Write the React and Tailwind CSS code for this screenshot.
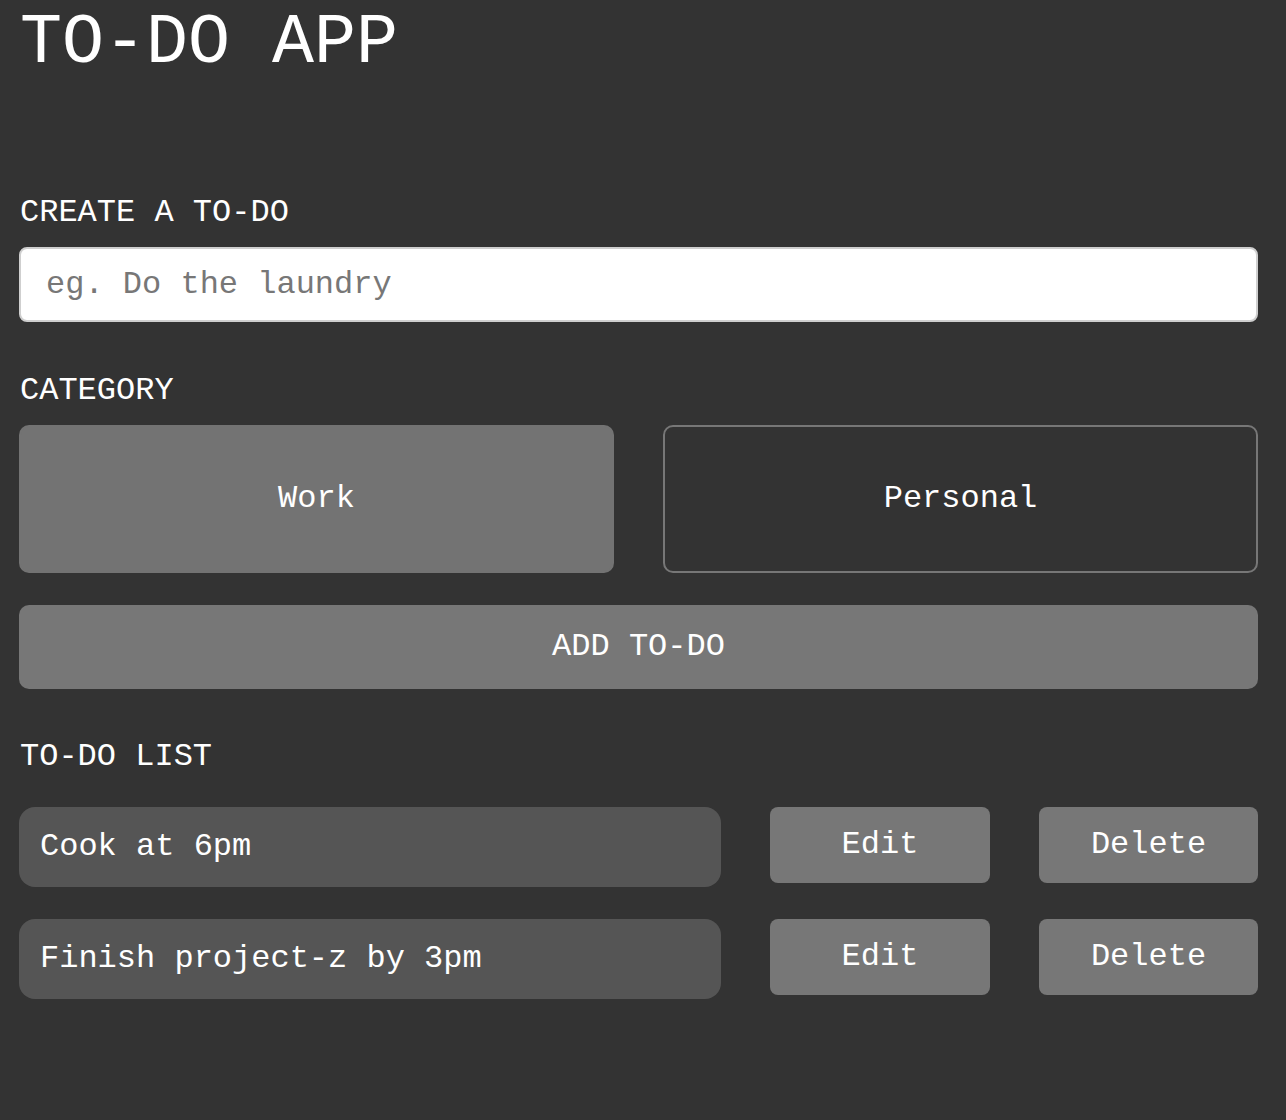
import React, { useState } from "react";

const todos = [
  { id: 1, text: "Cook at 6pm" },
  { id: 2, text: "Finish project-z by 3pm" },
];

export default function App() {
  const [category, setCategory] = useState("work");
  const [value, setValue] = useState("");

  return (
    <div className="min-h-screen bg-[#333333] text-white font-['Liberation_Mono','Courier_New',monospace]">
      <div className="w-[1239px] ml-[19px] pt-[9px] pb-[120px]">
        <h1 className="text-[70px] leading-none font-normal pl-px">TO-DO APP</h1>

        {/* create */}
        <h2 className="mt-[118px] text-[32px] leading-none pl-px">CREATE A TO-DO</h2>
        <input
          type="text"
          value={value}
          onChange={(e) => setValue(e.target.value)}
          placeholder="eg. Do the laundry"
          className="mt-[18px] block w-full h-[75px] px-[25px] bg-white text-black text-[32px] border-2 border-[#cfcfcf] rounded-[8px] outline-none placeholder:text-[#777777]"
        />

        <h2 className="mt-[53px] text-[32px] leading-none pl-px">CATEGORY</h2>
        <div className="mt-[18px] grid grid-cols-2 gap-[49px]">
          <button
            onClick={() => setCategory("work")}
            className={
              category === "work"
                ? "h-[148px] rounded-[10px] bg-[#737373] text-[32px] text-white border-2 border-[#737373]"
                : "h-[148px] rounded-[10px] bg-transparent text-[32px] text-white border-2 border-[#777777]"
            }
          >
            Work
          </button>
          <button
            onClick={() => setCategory("personal")}
            className={
              category === "personal"
                ? "h-[148px] rounded-[10px] bg-[#737373] text-[32px] text-white border-2 border-[#737373]"
                : "h-[148px] rounded-[10px] bg-transparent text-[32px] text-white border-2 border-[#777777]"
            }
          >
            Personal
          </button>
        </div>

        <button className="mt-[32px] block w-full h-[84px] rounded-[10px] bg-[#777777] text-[32px] text-white">
          ADD TO-DO
        </button>

        {/* list */}
        <h2 className="mt-[52px] text-[32px] leading-none pl-px">TO-DO LIST</h2>
        <div className="mt-[34px] flex flex-col gap-[32px]">
          {todos.map((todo) => (
            <div key={todo.id} className="flex items-start gap-[49px]">
              <div className="w-[702px] h-[80px] flex items-center px-[21px] bg-[#555555] rounded-[16px] text-[32px]">
                {todo.text}
              </div>
              <button className="w-[220px] h-[76px] rounded-[8px] bg-[#777777] text-[32px] text-white">
                Edit
              </button>
              <button className="w-[219px] h-[76px] rounded-[8px] bg-[#777777] text-[32px] text-white">
                Delete
              </button>
            </div>
          ))}
        </div>
      </div>
    </div>
  );
}
